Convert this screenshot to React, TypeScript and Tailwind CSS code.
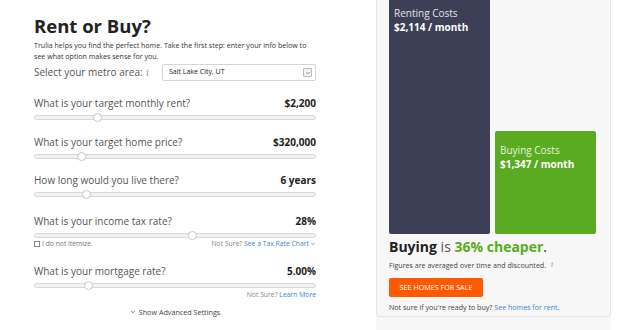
import { ChevronDown } from "lucide-react";

const font = { fontFamily: '"Open Sans", "Liberation Sans", sans-serif' };

function Slider({ pos }: { pos: number }) {
  return (
    <div className="relative h-[10px] flex items-center">
      <div className="w-full h-[5px] rounded-full border border-[#d9d9d9] bg-[#f2f2f2]" />
      <div
        className="absolute top-[0.5px] w-[9px] h-[9px] rounded-full border border-[#c8c8c8] bg-white"
        style={{ left: pos - 34 - 4 }}
      />
    </div>
  );
}

function Question({ label, value, pos }: { label: string; value: string; pos: number }) {
  return (
    <div>
      <div className="flex justify-between items-center text-[10px] leading-[14px]">
        <span className="text-[#555]">{label}</span>
        <span className="font-bold text-[#222]">{value}</span>
      </div>
      <div className="mt-[2px]">
        <Slider pos={pos} />
      </div>
    </div>
  );
}

export default function App() {
  return (
    <div className="w-[636px] h-[330px] bg-white overflow-hidden flex" style={font}>
      <div className="w-[282px] ml-[34px] pt-[15px]">
        <h1 className="text-[18.5px] font-bold text-[#222] leading-[22px]">Rent or Buy?</h1>
        <p className="text-[7.1px] text-[#333] leading-[11px] mt-[2.5px]">
          Trulia helps you find the perfect home. Take the first step: enter your info below to see what option makes
          sense for you.
        </p>
        <div className="flex items-center justify-between mt-[2.5px] h-[17px]">
          <span className="text-[10px] text-[#555] whitespace-nowrap">
            Select your metro area: <span className="italic text-[#999] font-serif text-[10px] ml-[1px]">i</span>
          </span>
          <div className="w-[154px] h-[17px] border border-[#d5d5d5] rounded-[2px] flex items-center justify-between pl-[6px] pr-[3px] bg-white">
            <span className="text-[7px] text-[#222]">Salt Lake City, UT</span>
            <span className="w-[9px] h-[9px] border border-[#bbb] rounded-[1px] bg-[#f4f4f4] flex items-center justify-center">
              <ChevronDown size={6} strokeWidth={3} color="#666" />
            </span>
          </div>
        </div>

        <div className="mt-[15px]">
          <Question label="What is your target monthly rent?" value="$2,200" pos={97} />
        </div>
        <div className="mt-[13px]">
          <Question label="What is your target home price?" value="$320,000" pos={81} />
        </div>
        <div className="mt-[12px]">
          <Question label="How long would you live there?" value="6 years" pos={86} />
        </div>
        <div className="mt-[15px]">
          <Question label="What is your income tax rate?" value="28%" pos={192} />
          <div className="flex justify-between items-center text-[6.8px] leading-[8px]">
            <span className="flex items-center gap-[2px] text-[#777]">
              <span className="inline-block w-[6px] h-[6px] border border-[#888] bg-white" />I do not itemize.
            </span>
            <span className="text-[#888] flex items-center">
              Not Sure?&nbsp;<span className="text-[#3a87d6]">See a Tax Rate Chart</span>
              <ChevronDown size={6} strokeWidth={3} color="#3a87d6" className="ml-[1px]" />
            </span>
          </div>
        </div>
        <div className="mt-[16px]">
          <Question label="What is your mortgage rate?" value="5.00%" pos={88} />
          <div className="flex justify-end text-[6.8px] mt-[1px] leading-[8px] text-[#888]">
            Not Sure?&nbsp;<span className="text-[#3a87d6]">Learn More</span>
          </div>
        </div>
        <div className="flex justify-center items-center mt-[9px] text-[7.2px] leading-[8px] text-[#444] gap-[3px]">
          <ChevronDown size={6} strokeWidth={3} color="#444" />
          Show Advanced Settings
        </div>
      </div>

      <div className="ml-[60px] w-[235px] flex flex-col">
        <div className="h-[317px] bg-[#f7f7f7] border border-t-0 border-[#e6e6e6] rounded-b-[3px] pl-[12px] flex flex-col">
          <div className="flex items-end gap-[5px] h-[234px]">
            <div className="w-[101px] h-full bg-[#3d3f56] rounded-b-[2px] pl-[5px] pt-[6px] text-white">
              <div className="text-[10px] leading-[14px] text-[#e3e3ea]">Renting Costs</div>
              <div className="text-[10px] leading-[14px] font-bold">$2,114 / month</div>
            </div>
            <div className="w-[101px] h-[103px] bg-[#5aab21] rounded-[2px] pl-[5px] pt-[12px] text-white">
              <div className="text-[10px] leading-[14px] text-[#e6f4da]">Buying Costs</div>
              <div className="text-[10px] leading-[14px] font-bold">$1,347 / month</div>
            </div>
          </div>
          <div className="text-[14px] leading-[18px] mt-[4px] text-[#222]">
            <span className="font-bold">Buying</span> <span className="text-[#555]">is</span>{" "}
            <span className="font-bold text-[#5aab21]">36% cheaper</span>.
          </div>
          <div className="text-[7.1px] leading-[10px] text-[#444] mt-[4px] flex items-center gap-[5px]">
            Figures are averaged over time and discounted.
            <span className="italic text-[#999] font-serif text-[8px]">i</span>
          </div>
          <div className="mt-[8px] w-[94px] h-[19px] bg-[#ff5a00] rounded-[2px] flex items-center justify-center text-[7.2px] text-white">
            SEE HOMES FOR SALE
          </div>
          <div className="text-[7.1px] leading-[10px] text-[#444] mt-[5px]">
            Not sure if you're ready to buy? <span className="text-[#3a87d6]">See homes for rent.</span>
          </div>
        </div>
        <div className="flex-1 bg-[#f7f7f7]" />
      </div>
    </div>
  );
}
